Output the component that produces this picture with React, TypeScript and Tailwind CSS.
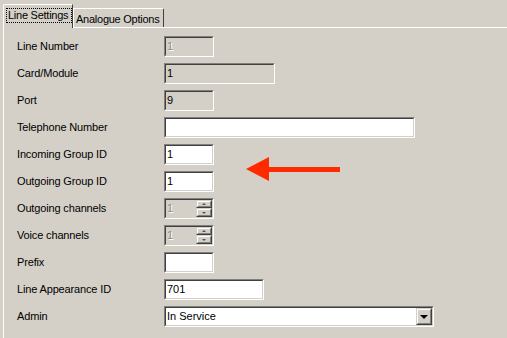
import React from "react";

// Classic Windows sunken edit box
const Sunken = ({
  w,
  gray,
  children,
}: {
  w: string;
  gray?: boolean;
  children?: React.ReactNode;
}) => (
  <div
    className={`${w} h-[21px] border border-t-[#808080] border-l-[#808080] border-b-white border-r-white`}
  >
    <div
      className={`h-full flex items-center border border-t-[#404040] border-l-[#404040] border-b-[#d4d0c8] border-r-[#d4d0c8] ${gray ? "bg-[#d4d0c8]" : "bg-white"}`}
    >
      {children}
    </div>
  </div>
);

const Text = ({ value, dim }: { value: string; dim?: boolean }) => (
  <span
    className={`pl-[1px] leading-none ${dim ? "text-[#8a8a8a] [text-shadow:1px_1px_0_#fff]" : "text-black"}`}
  >
    {value}
  </span>
);

// raised little button (spinner / combo)
const Raised = ({ cls, children }: { cls: string; children?: React.ReactNode }) => (
  <div
    className={`${cls} border border-t-[#d4d0c8] border-l-[#d4d0c8] border-b-[#404040] border-r-[#404040]`}
  >
    <div className="h-full flex items-center justify-center bg-[#d4d0c8] border border-t-white border-l-white border-b-[#808080] border-r-[#808080]">
      {children}
    </div>
  </div>
);

const Spinner = () => (
  <Sunken w="w-[50px]" gray>
    <div className="flex-1 flex items-center h-full">
      <Text value="1" dim />
    </div>
    <div className="flex flex-col w-[16px] h-full">
      <Raised cls="h-[8px] w-[16px]">
        <div className="w-0 h-0 border-l-[2px] border-r-[2px] border-b-[2px] border-l-transparent border-r-transparent border-b-[#555]" />
      </Raised>
      <Raised cls="h-[9px] w-[16px]">
        <div className="w-0 h-0 border-l-[2px] border-r-[2px] border-t-[2px] border-l-transparent border-r-transparent border-t-[#555]" />
      </Raised>
    </div>
  </Sunken>
);

const Row = ({ label, children }: { label: string; children: React.ReactNode }) => (
  <div className="flex items-center h-[21px]">
    <div className="w-[147px] text-black tracking-[-0.15px]">{label}</div>
    {children}
  </div>
);

export default function App() {
  return (
    <div
      className="relative w-[507px] h-[338px] overflow-hidden bg-[#d4d0c8] pl-[3px] text-[11px]"
      style={{ fontFamily: '"Liberation Sans", Arial, sans-serif' }}
    >
      {/* Tabs */}
      <div className="flex items-end h-[27px] pt-[3px] whitespace-nowrap">
        <div className="relative z-10 -mb-[1px] h-[24px] w-[70px] border-l border-t border-white border-r border-r-[#404040] bg-[#d4d0c8] rounded-tl-[2px] pl-[2px] pt-[3px]">
          <div className="border border-dotted border-black h-[15px] w-[66px] flex items-center pl-[1px] text-black tracking-[-0.25px]">
            Line Settings
          </div>
        </div>
        <div className="h-[19px] w-[91px] border-l border-t border-white border-r border-r-[#404040] rounded-tr-[2px] flex items-start pt-[2px] pl-[2px] text-black tracking-[-0.25px]">
          Analogue Options
        </div>
      </div>

      {/* Panel */}
      <div className="h-[311px] border-l border-t border-white pl-[13px] pt-[8px] flex flex-col gap-[6px]">
        <Row label="Line Number">
          <Sunken w="w-[50px]" gray>
            <Text value="1" dim />
          </Sunken>
        </Row>
        <Row label="Card/Module">
          <Sunken w="w-[111px]" gray>
            <Text value="1" />
          </Sunken>
        </Row>
        <Row label="Port">
          <Sunken w="w-[50px]" gray>
            <Text value="9" />
          </Sunken>
        </Row>
        <Row label="Telephone Number">
          <Sunken w="w-[251px]" />
        </Row>
        <Row label="Incoming Group ID">
          <Sunken w="w-[50px]">
            <Text value="1" />
          </Sunken>
        </Row>
        <Row label="Outgoing Group ID">
          <Sunken w="w-[50px]">
            <Text value="1" />
          </Sunken>
        </Row>
        <Row label="Outgoing channels">
          <Spinner />
        </Row>
        <Row label="Voice channels">
          <Spinner />
        </Row>
        <Row label="Prefix">
          <Sunken w="w-[50px]" />
        </Row>
        <Row label="Line Appearance ID">
          <Sunken w="w-[100px]">
            <Text value="701" />
          </Sunken>
        </Row>
        <Row label="Admin">
          <Sunken w="w-[270px]">
            <div className="flex-1">
              <Text value="In Service" />
            </div>
            <Raised cls="w-[16px] h-[17px]">
              <div className="w-0 h-0 border-l-[4px] border-r-[4px] border-t-[4px] border-l-transparent border-r-transparent border-t-black" />
            </Raised>
          </Sunken>
        </Row>
      </div>

      {/* Red annotation arrow */}
      <svg
        className="absolute left-[246px] top-[157px]"
        width="96"
        height="25"
        viewBox="0 0 96 25"
      >
        <polygon points="0,12 23,0 23,24" fill="#ff2a00" />
        <rect x="22" y="10" width="72" height="5" fill="#ff2a00" />
      </svg>
    </div>
  );
}
